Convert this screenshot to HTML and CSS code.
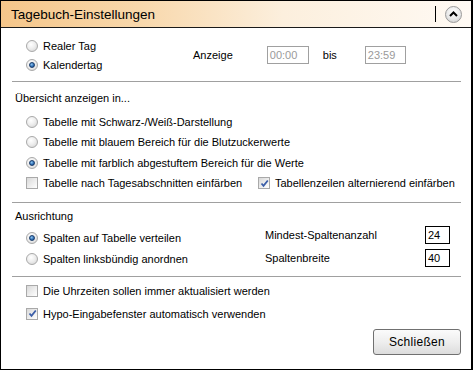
FILE: index.html
```html
<!DOCTYPE html>
<html lang="de">
<head>
    <meta charset="UTF-8">
    <title>Tagebuch-Einstellungen</title>
    <link rel="stylesheet" href="styles.css">
</head>
<body>
<div class="window">
    <!-- Titelleiste -->
    <div class="header">
        <span class="title">Tagebuch-Einstellungen</span>
        <span class="header-sep"></span>
        <span class="collapse-btn">
            <svg width="9" height="6" viewBox="0 0 9 6"><path d="M1 5 L4.5 1.5 L8 5" fill="none" stroke="#000" stroke-width="2"/></svg>
        </span>
    </div>

    <div class="content">
        <!-- Anzeige -->
        <div class="time-section">
            <div class="time-left">
                <label class="option"><span class="radio"></span>Realer Tag</label>
                <label class="option"><span class="radio checked"></span>Kalendertag</label>
            </div>
            <div class="time-range">
                <span class="range-label">Anzeige</span>
                <span class="field field-disabled field-from">00:00</span>
                <span class="range-bis">bis</span>
                <span class="field field-disabled field-to">23:59</span>
            </div>
        </div>

        <div class="separator sep-1"></div>

        <!-- Übersicht -->
        <div class="heading heading-overview">Übersicht anzeigen in...</div>
        <div class="options-list">
            <label class="option row-a"><span class="radio"></span>Tabelle mit Schwarz-/Weiß-Darstellung</label>
            <label class="option row-b"><span class="radio"></span>Tabelle mit blauem Bereich für die Blutzuckerwerte</label>
            <label class="option row-a"><span class="radio checked"></span>Tabelle mit farblich abgestuftem Bereich für die Werte</label>
            <div class="check-row row-b">
                <label class="option check-col"><span class="checkbox"></span>Tabelle nach Tagesabschnitten einfärben</label>
                <label class="option"><span class="checkbox checked"><svg width="9" height="9" viewBox="0 0 9 9"><path d="M1.5 4.5 L3.5 6.8 L7.8 1.5" fill="none" stroke="#3b5ea8" stroke-width="1.8"/></svg></span>Tabellenzeilen alternierend einfärben</label>
            </div>
        </div>

        <div class="separator sep-2"></div>

        <!-- Ausrichtung -->
        <div class="heading heading-align">Ausrichtung</div>
        <div class="align-section">
            <div class="align-left">
                <label class="option"><span class="radio checked"></span>Spalten auf Tabelle verteilen</label>
                <label class="option"><span class="radio"></span>Spalten linksbündig anordnen</label>
            </div>
            <div class="align-right">
                <div class="num-row"><span>Mindest-Spaltenanzahl</span><span class="field field-num">24</span></div>
                <div class="num-row"><span>Spaltenbreite</span><span class="field field-num">40</span></div>
            </div>
        </div>

        <div class="separator sep-3"></div>

        <!-- Sonstiges -->
        <div class="misc">
            <label class="option misc-row"><span class="checkbox"></span>Die Uhrzeiten sollen immer aktualisiert werden</label>
            <label class="option misc-row"><span class="checkbox checked"><svg width="9" height="9" viewBox="0 0 9 9"><path d="M1.5 4.5 L3.5 6.8 L7.8 1.5" fill="none" stroke="#3b5ea8" stroke-width="1.8"/></svg></span>Hypo-Eingabefenster automatisch verwenden</label>
        </div>

        <div class="footer">
            <button class="btn">Schließen</button>
        </div>
    </div>
</div>
</body>
</html>
```

FILE: styles.css
```css
/* Grundlayout */
body {
    margin: 0;
    background: #fff;
    font-family: "Liberation Sans", Arial, sans-serif;
    font-size: 11px;
    color: #000;
}
.window {
    width: 473px;
    height: 370px;
    box-sizing: border-box;
    border: 1px solid #000;
    border-right-width: 2px;
    overflow: hidden;
}

/* Titelleiste */
.header {
    height: 26px;
    border-bottom: 1px solid #1a1a1a;
    display: flex;
    align-items: center;
    padding-left: 10px;
    background: linear-gradient(to right, #f5c68a 0%, #f8d8ac 30%, #fcefdd 60%, #fffaf4 100%);
}
.title {
    font-size: 13.5px;
    color: #000;
    flex: 1;
}
.header-sep {
    width: 1px;
    height: 16px;
    background: #000;
    margin-right: 9px;
}
.collapse-btn {
    width: 17px;
    height: 17px;
    border-radius: 50%;
    border: 1px solid #9a9a9a;
    background: radial-gradient(circle at 50% 35%, #ffffff 0%, #e9e9e9 55%, #c4c4c4 100%);
    display: flex;
    align-items: center;
    justify-content: center;
    margin-right: 9px;
    box-sizing: border-box;
}

/* Inhalt */
.content {
    padding: 0 10px 0 11px;
}
.separator {
    height: 1px;
    background: #a0a0a0;
}
.heading {
    height: 16px;
    line-height: 16px;
    padding-left: 3px;
}
.option {
    display: flex;
    align-items: center;
    white-space: nowrap;
}

/* Radio- und Checkbox-Darstellung (XP-Stil) */
.radio {
    width: 10px;
    height: 10px;
    border-radius: 50%;
    border: 1px solid #a9a9a9;
    background: radial-gradient(circle at 40% 35%, #ffffff 0%, #ececec 50%, #cfcfcf 100%);
    margin-right: 5px;
    position: relative;
    flex-shrink: 0;
}
.radio.checked::after {
    content: "";
    position: absolute;
    left: 2px;
    top: 2px;
    width: 4px;
    height: 4px;
    border-radius: 50%;
    border: 1px solid #1b3d6b;
    background: radial-gradient(circle at 40% 35%, #8cc4f0 0%, #2d6db4 60%, #163f75 100%);
}
.checkbox {
    width: 10px;
    height: 10px;
    border: 1px solid #a9a9a9;
    background: linear-gradient(135deg, #d8d8d8 0%, #ececec 50%, #ffffff 100%);
    margin-right: 5px;
    display: flex;
    align-items: center;
    justify-content: center;
    flex-shrink: 0;
}

/* Anzeige-Zeitraum */
.time-section {
    display: flex;
    align-items: center;
    padding-top: 8px;
    margin-bottom: 7px;
}
.time-left {
    width: 167px;
    padding-left: 14px;
}
.time-left .option {
    height: 19px;
}
.time-range {
    display: flex;
    align-items: center;
}
.field {
    height: 18px;
    box-sizing: border-box;
    line-height: 16px;
    padding-left: 2px;
    background: #fff;
}
.field-disabled {
    border: 1px solid #a0a0a0;
    color: #9a9a9a;
}
.field-from {
    width: 42px;
    margin-left: 34px;
}
.range-bis {
    margin-left: 14px;
}
.field-to {
    width: 41px;
    margin-left: 28px;
}

/* Übersicht */
.heading-overview {
    margin-top: 8px;
}
.options-list {
    margin-top: 5px;
    padding-left: 14px;
}
.row-a {
    height: 21px;
}
.row-b {
    height: 20px;
}
.check-row {
    display: flex;
    align-items: center;
}
.check-col {
    width: 232px;
}
.sep-2 {
    margin-top: 9px;
}

/* Ausrichtung */
.heading-align {
    margin-top: 5px;
}
.align-section {
    display: flex;
}
.align-left {
    width: 239px;
    padding-left: 14px;
    padding-top: 3px;
}
.align-left .option {
    height: 21px;
}
.align-right {
    width: 185px;
    display: flex;
    flex-direction: column;
    gap: 2px;
}
.num-row {
    height: 21px;
    display: flex;
    align-items: center;
    justify-content: space-between;
}
.field-num {
    width: 25px;
    border: 1px solid #000;
}
.sep-3 {
    margin-top: 7px;
}

/* Sonstiges */
.misc {
    margin-top: 2px;
    padding-left: 14px;
}
.misc-row {
    height: 23px;
}

/* Schaltfläche */
.footer {
    display: flex;
    justify-content: flex-end;
    margin-top: 4px;
}
.btn {
    width: 88px;
    height: 26px;
    font-family: "Liberation Sans", Arial, sans-serif;
    font-size: 12px;
    letter-spacing: 0.3px;
    color: #000;
    border: 1px solid #707070;
    border-radius: 3px;
    background: linear-gradient(to bottom, #fbfbfb 0%, #eeeeee 50%, #dcdcdc 100%);
    cursor: pointer;
}
```
